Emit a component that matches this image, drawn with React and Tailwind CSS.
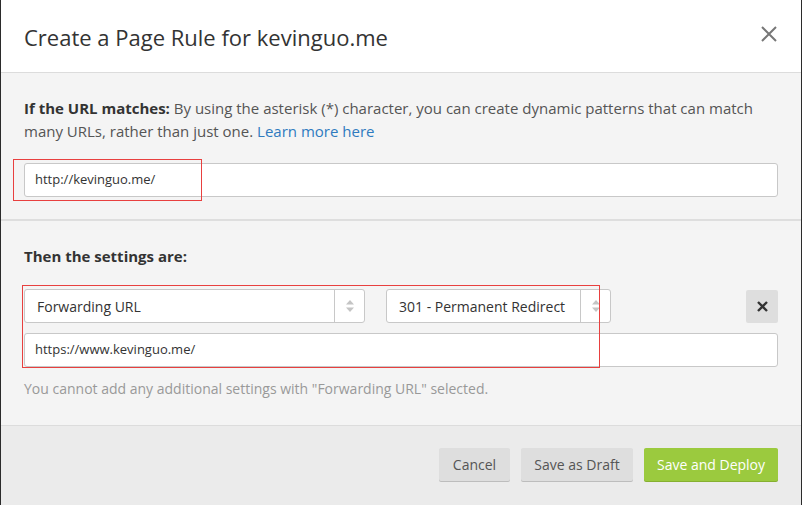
import React from "react";

const Arrows = () => (
  <svg width="8" height="12" viewBox="0 0 8 12" className="text-[#c4c4c4]">
    <path d="M4 0 L8 4.5 H0 Z" fill="currentColor" />
    <path d="M4 12 L8 7.5 H0 Z" fill="currentColor" />
  </svg>
);

const Select = ({ value, width, arrowWidth }) => (
  <div
    className={`flex h-[34px] ${width} items-stretch rounded-[3px] border border-[#c8c8c8] bg-white`}
  >
    <div className="flex flex-1 items-center pl-3 text-[14px] text-[#333]">{value}</div>
    <div className={`flex ${arrowWidth} items-center justify-center border-l border-[#c8c8c8]`}>
      <Arrows />
    </div>
  </div>
);

const App = () => {
  return (
    <div
      className="relative h-[505px] w-[802px] overflow-hidden border-l border-r border-[#2b2b2b] bg-[#f4f4f4]"
      style={{ fontFamily: '"Open Sans", "Liberation Sans", sans-serif' }}
    >
      {/* header */}
      <div className="flex h-[73px] items-center justify-between border-b border-[#dcdcdc] bg-white pl-[23px] pr-[24px]">
        <h1 className="mt-[2px] text-[22px] font-normal text-[#333]">Create a Page Rule for kevinguo.me</h1>
        <svg width="16" height="16" viewBox="0 0 16 16" className="mb-[4px]">
          <path d="M1 1 L15 15 M15 1 L1 15" stroke="#777" strokeWidth="2" />
        </svg>
      </div>

      {/* url section */}
      <div className="h-[148px] border-b-2 border-[#dedede] px-[23px] pt-[24px]">
        <p className="text-[15px] leading-[23px] text-[#555]">
          <span className="font-bold text-[#333]">If the URL matches:</span> By using the asterisk (*)
          character, you can create dynamic patterns that can match many URLs, rather than just one.{" "}
          <span className="text-[#2f7bbf]">Learn more here</span>
        </p>
        <div className="mt-[20px] flex h-[34px] items-center rounded-[3px] border border-[#c8c8c8] bg-white pl-[10px] text-[13px] text-[#333]">
          http://kevinguo.me/
        </div>
      </div>

      {/* settings section */}
      <div className="h-[205px] border-b border-[#dcdcdc] px-[23px] pt-[24px]">
        <p className="text-[15px] font-bold leading-[23px] text-[#333]">Then the settings are:</p>
        <div className="mt-[21px] flex items-center">
          <Select value="Forwarding URL" width="w-[341px]" arrowWidth="w-[30px]" />
          <div className="ml-[21px]">
            <Select value="301 - Permanent Redirect" width="w-[225px]" arrowWidth="w-[30px]" />
          </div>
          <div className="ml-auto flex h-[33px] w-[32px] items-center justify-center rounded-[2px] bg-[#dedede]">
            <svg width="11" height="11" viewBox="0 0 11 11">
              <path d="M1 1 L10 10 M10 1 L1 10" stroke="#333" strokeWidth="2.4" />
            </svg>
          </div>
        </div>
        <div className="mt-[10px] flex h-[34px] items-center rounded-[3px] border border-[#c8c8c8] bg-white pl-[10px] text-[13px] text-[#333]">
          https://www.kevinguo.me/
        </div>
        <p className="mt-[11px] text-[14px] text-[#999]">
          You cannot add any additional settings with "Forwarding URL" selected.
        </p>
      </div>

      {/* footer */}
      <div className="flex h-[80px] items-start justify-end gap-[11px] bg-[#ebebeb] pr-[23px] pt-[22px]">
        <button className="h-[33px] w-[71px] rounded-[2px] bg-[#dedede] text-[14px] text-[#555] shadow-[0_1px_0_#bdbdbd]">
          Cancel
        </button>
        <button className="h-[33px] w-[112px] rounded-[2px] bg-[#dedede] text-[14px] text-[#555] shadow-[0_1px_0_#bdbdbd]">
          Save as Draft
        </button>
        <button className="h-[33px] w-[134px] rounded-[2px] bg-[#9bca3e] text-[14px] text-white shadow-[0_1px_0_#86b030]">
          Save and Deploy
        </button>
      </div>

      {/* red annotation boxes */}
      <div className="pointer-events-none absolute left-[12px] top-[159px] h-[42px] w-[189px] border border-[#e8403f]" />
      <div className="pointer-events-none absolute left-[21px] top-[285px] h-[83px] w-[578px] border border-[#e8403f]" />
    </div>
  );
};

export default App;
